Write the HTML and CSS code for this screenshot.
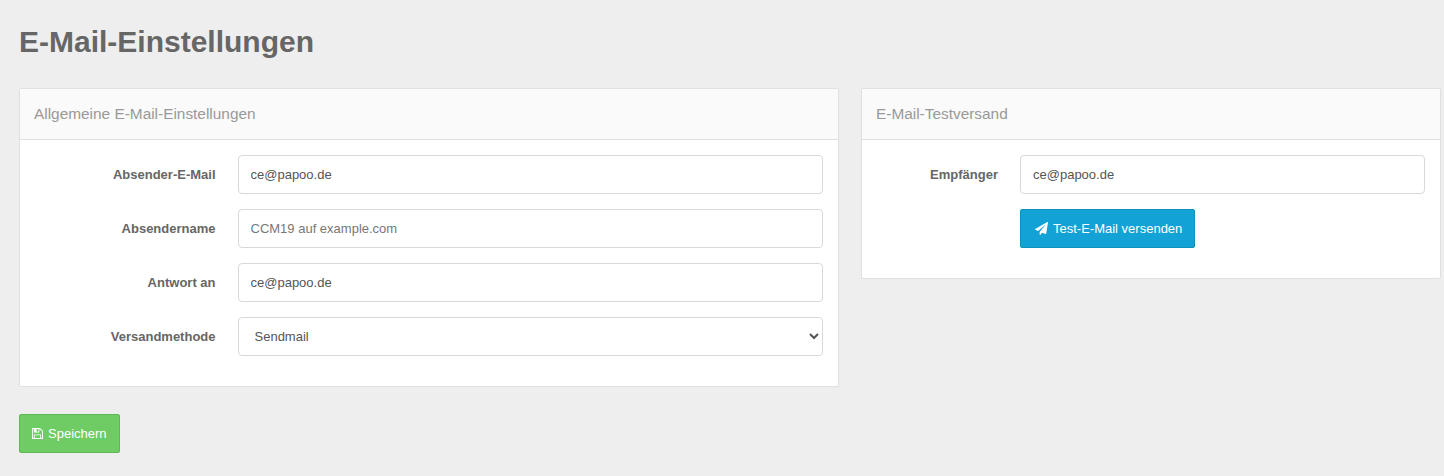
FILE: index.html
```
<!DOCTYPE html>
<html lang="de">
<head>
<meta charset="utf-8">
<title>E-Mail-Einstellungen</title>
<link rel="stylesheet" href="styles.css">
</head>
<body>
<main class="page">
  <h1 class="title">E-Mail-Einstellungen</h1>
  <div class="columns">
    <section class="panel panel-general">
      <h2 class="panel-heading">Allgemeine E-Mail-Einstellungen</h2>
      <div class="panel-body">
        <label class="label" for="mail">Absender-E-Mail</label>
        <input class="control" id="mail" type="text" value="ce@papoo.de">
        <label class="label" for="name">Absendername</label>
        <input class="control" id="name" type="text" placeholder="CCM19 auf example.com">
        <label class="label" for="reply">Antwort an</label>
        <input class="control" id="reply" type="text" value="ce@papoo.de">
        <label class="label" for="method">Versandmethode</label>
        <select class="control control-select" id="method"><option>Sendmail</option></select>
      </div>
    </section>
    <section class="panel panel-test">
      <h2 class="panel-heading">E-Mail-Testversand</h2>
      <div class="panel-body">
        <label class="label" for="to">Empfänger</label>
        <input class="control" id="to" type="text" value="ce@papoo.de">
        <button class="button button-send" type="button">
          <svg class="icon icon-plane" viewBox="0 0 1792 1792"><path d="M1764 11q33 24 27 64l-256 1536q-5 29-32 45-14 8-31 8-11 0-24-5l-453-185-242 295q-18 23-49 23-13 0-22-4-19-7-30.500-23.500T640 1728v-349l864-1059-1069 925-395-162Q3 1068 0 1028q-3-39 32-59L1696 9q15-9 32-9 20 0 36 11z"/></svg>
          <span>Test-E-Mail versenden</span>
        </button>
      </div>
    </section>
  </div>
  <button class="button button-save" type="button">
    <svg class="icon icon-save" viewBox="0 128 1536 1536"><path d="M384 1536h768v-384H384v384zm896 0h128V640q0-14-10-38.500t-20-34.500l-281-281q-10-10-34-20t-39-10v416q0 40-28 68t-68 28H352q-40 0-68-28t-28-68V256H128v1280h128v-416q0-40 28-68t68-28h832q40 0 68 28t28 68v416zM896 608V288q0-13-9.500-22.500T864 256H672q-13 0-22.500 9.500T640 288v320q0 13 9.500 22.500T672 640h192q13 0 22.500-9.500T896 608zm640 32v928q0 40-28 68t-68 28H96q-40 0-68-28t-28-68V224q0-40 28-68t68-28h928q40 0 88 20t76 48l280 280q28 28 48 76t20 88z"/></svg>
    <span>Speichern</span>
  </button>
</main>
</body>
</html>
```
FILE: styles.css
```
* { box-sizing: border-box; }
body {
  margin: 0;
  background: #eee;
  color: #666;
  font: 13px/20px "Liberation Sans", Arial, sans-serif;
}
.page { padding: 24px 3px 0 19px; }
.title {
  margin: 0 0 28px;
  font-size: 30px;
  line-height: 36px;
  font-weight: bold;
}
.columns {
  display: grid;
  grid-template-columns: 820px 580px;
  column-gap: 22px;
  align-items: start;
}
.panel {
  background: #fff;
  border: 1px solid #e0e0e0;
  border-radius: 2px;
}
.panel-heading {
  height: 51px;
  margin: 0;
  padding: 0 14px;
  background: #fafafa;
  border-bottom: 1px solid #e0e0e0;
  color: #999;
  font-size: 15.4px;
  font-weight: normal;
  line-height: 50px;
}
.panel-body {
  display: grid;
  gap: 15px 22px;
  align-items: center;
  padding: 15px 15px 30px;
}
.panel-general .panel-body { grid-template-columns: 181px 585px; }
.panel-test .panel-body { grid-template-columns: 121px 405px; }
.label { text-align: right; font-weight: bold; }
.panel-general .label { padding-right: 0.5px; }
.control {
  width: 100%;
  height: 39px;
  padding: 0 12px;
  background-color: #fff;
  border: 1px solid #d9d9d9;
  border-radius: 4px;
  color: #555;
  font: inherit;
}
.panel-general .control { padding-left: 11.5px; }
.control::placeholder { color: #777; }
.control-select { padding: 0; }
.button {
  display: flex;
  align-items: center;
  gap: 5px;
  height: 39px;
  padding: 0 11px;
  border: 1px solid;
  border-radius: 2px;
  color: #fff;
  font: inherit;
  white-space: nowrap;
}
.button-send {
  grid-column: 2;
  justify-self: start;
  width: 175px;
  padding: 0 11px 0 14px;
  background: #13a2d6;
  border-color: #118fbd;
}
.button-save {
  width: 101px;
  padding-left: 12px;
  margin-top: 27px;
  background: #6fcb63;
  border-color: #5fb755;
}
.icon { flex: none; fill: currentColor; }
.icon-plane { width: 13px; height: 13px; }
.icon-save { width: 11px; height: 11px; }
```
